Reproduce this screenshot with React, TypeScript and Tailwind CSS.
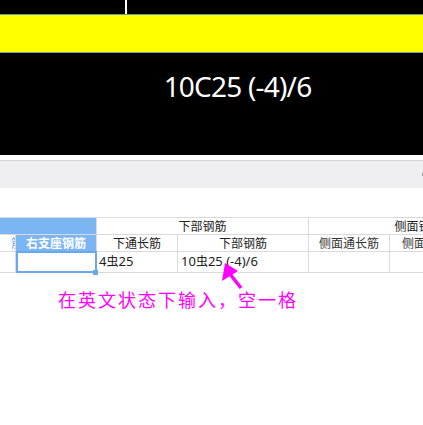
const cjk = { fontFamily: '"Noto Sans CJK SC", "Noto Sans", sans-serif' }

function Steel() {
  return <span className="text-[12px] leading-none">虫</span>
}

function Cell({
  className = '',
  children,
}: {
  className?: string
  children?: React.ReactNode
}) {
  return (
    <div
      className={`flex items-center overflow-hidden whitespace-nowrap border-b border-r border-[#dadada] ${className}`}
    >
      {children}
    </div>
  )
}

export default function App() {
  return (
    <div className="relative h-[425px] w-[423px] overflow-hidden bg-white" style={cjk}>
      {/* top drawing strip */}
      <div className="h-[14px] bg-black">
        <div className="ml-[125px] h-full w-[2px] bg-white" />
      </div>
      <div className="h-px bg-[#6f95b0]" />
      <div className="h-[37px] bg-[#ffff00]" />
      <div className="h-px bg-[#7d9db3]" />
      <div className="flex h-[102px] justify-center bg-black pt-[13px]">
        <span
          className="ml-[52px] text-[28px] leading-[40px] tracking-[-0.8px] text-white"
          style={{ fontFamily: '"Noto Sans", sans-serif' }}
        >
          10C25 (-4)/6
        </span>
      </div>
      <div className="h-[5px]" />
      <div className="flex h-[28px] items-center justify-end border-t border-[#d4d4d6] bg-[#efeff1]">
        <div className="h-[3px] w-px bg-[#9a9a9a]" />
      </div>
      <div className="h-[29px]" />

      {/* table */}
      <div className="w-[529px] border-t border-[#dadada] text-[12px] text-[#222]">
        <div className="grid h-[17px] grid-cols-[97px_212px_220px]">
          <Cell className="border-[#6aa8ee] bg-[#7bb5f4]" />
          <Cell className="justify-center">下部钢筋</Cell>
          <Cell className="justify-center">侧面钢筋</Cell>
        </div>
        <div className="grid h-[17px] grid-cols-[16px_81px_81px_131px_81px_139px]">
          <Cell className="justify-end bg-white text-[#6aa8ee]">
            <span className="-mr-[8px]">筋</span>
          </Cell>
          <Cell className="justify-center border-[#6aa8ee] bg-[#7bb5f4] font-bold text-white">右支座钢筋</Cell>
          <Cell className="justify-center">下通长筋</Cell>
          <Cell className="justify-center">下部钢筋</Cell>
          <Cell className="justify-center text-[#333]">侧面通长筋</Cell>
          <Cell className="pl-[12px] text-[#333]">侧面</Cell>
        </div>
        <div
          className="grid h-[21px] grid-cols-[16px_81px_81px_131px_81px_139px] text-[13px]"
          style={{ fontFamily: '"Noto Sans", "Noto Sans CJK SC", sans-serif' }}
        >
          <Cell />
          <div className="relative border-b border-r border-[#dadada]">
            <div className="absolute -top-px -right-px -bottom-px left-0 border-2 border-[#6aa8ee]" />
            <div className="absolute -right-[2px] -bottom-[3px] h-[5px] w-[5px] bg-[#6aa8ee]" />
          </div>
          <Cell className="pl-[2px]">
            4<Steel />25
          </Cell>
          <Cell className="pl-[3px]">
            10<Steel />25 (-4)/6
          </Cell>
          <Cell />
          <Cell />
        </div>
      </div>

      {/* annotation */}
      <div className="ml-[58px] mt-[14px] text-[18px] leading-[24px] tracking-[2px] text-[#ff00ff]">
        在英文状态下输入，空一格
      </div>

      <svg className="absolute left-0 top-0" width="423" height="425" viewBox="0 0 423 425">
        <line x1="241" y1="288" x2="230" y2="274" stroke="#ff00ff" strokeWidth="3.5" />
        <polygon points="225,263 222,281 238,271" fill="#ff00ff" />
      </svg>
    </div>
  )
}
